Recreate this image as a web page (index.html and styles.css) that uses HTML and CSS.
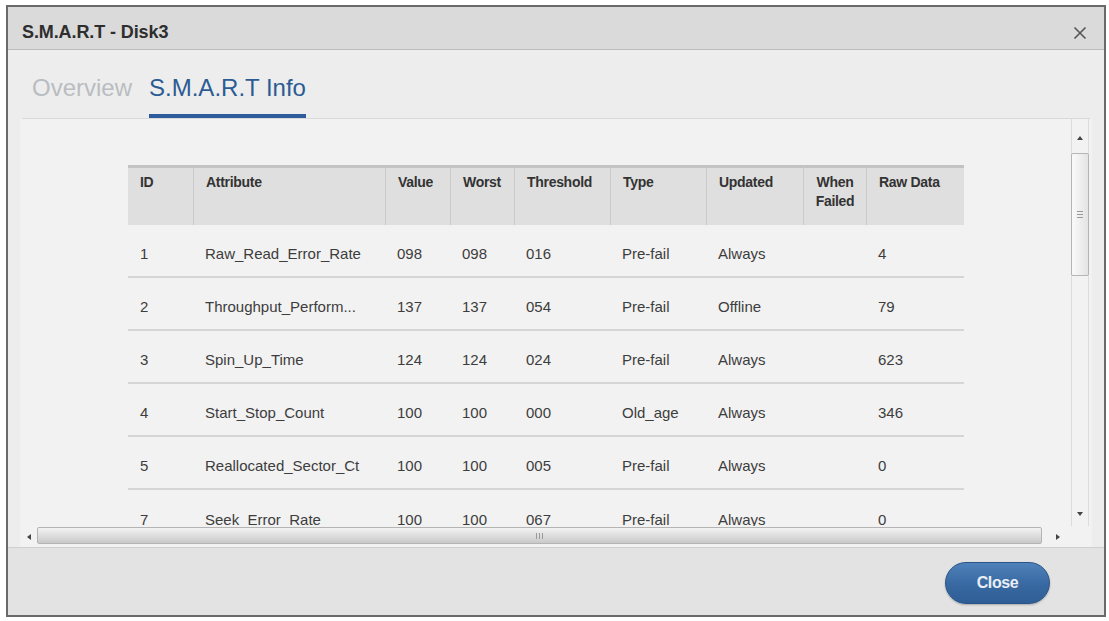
FILE: index.html
```html
<!DOCTYPE html>
<html lang="en">

<head>
  <meta charset="UTF-8">
  <meta name="viewport" content="width=device-width, initial-scale=1.0">
  <title>S.M.A.R.T - Disk3</title>
  <link rel="stylesheet" href="styles.css">
</head>

<body>
  <div class="c-dialog">
    <header class="c-dialog__head">
      <h1 class="c-dialog__title">S.M.A.R.T - Disk3</h1>
      <button class="c-dialog__x" aria-label="close">
        <svg width="14" height="14" viewBox="0 0 14 14">
          <path d="M1.5 1.5 L12.5 12.5 M12.5 1.5 L1.5 12.5" stroke="#555" stroke-width="1.6" fill="none" />
        </svg>
      </button>
    </header>

    <nav class="c-tabs">
      <span class="c-tabs__item">Overview</span>
      <span class="c-tabs__item is-active">S.M.A.R.T Info</span>
    </nav>

    <div class="c-scroll">
      <div class="c-scroll__view">
        <table class="c-smart">
          <colgroup>
            <col style="width: 65px">
            <col style="width: 192px">
            <col style="width: 65px">
            <col style="width: 64px">
            <col style="width: 96px">
            <col style="width: 96px">
            <col style="width: 97px">
            <col style="width: 63px">
            <col style="width: 98px">
          </colgroup>
          <thead>
            <tr>
              <th>ID</th>
              <th>Attribute</th>
              <th>Value</th>
              <th>Worst</th>
              <th>Threshold</th>
              <th>Type</th>
              <th>Updated</th>
              <th class="is-center">When<br>Failed</th>
              <th>Raw Data</th>
            </tr>
          </thead>
          <tbody>
            <tr>
              <td>1</td><td>Raw_Read_Error_Rate</td><td>098</td><td>098</td><td>016</td><td>Pre-fail</td><td>Always</td><td></td><td>4</td>
            </tr>
            <tr>
              <td>2</td><td>Throughput_Perform...</td><td>137</td><td>137</td><td>054</td><td>Pre-fail</td><td>Offline</td><td></td><td>79</td>
            </tr>
            <tr>
              <td>3</td><td>Spin_Up_Time</td><td>124</td><td>124</td><td>024</td><td>Pre-fail</td><td>Always</td><td></td><td>623</td>
            </tr>
            <tr>
              <td>4</td><td>Start_Stop_Count</td><td>100</td><td>100</td><td>000</td><td>Old_age</td><td>Always</td><td></td><td>346</td>
            </tr>
            <tr>
              <td>5</td><td>Reallocated_Sector_Ct</td><td>100</td><td>100</td><td>005</td><td>Pre-fail</td><td>Always</td><td></td><td>0</td>
            </tr>
            <tr>
              <td>7</td><td>Seek_Error_Rate</td><td>100</td><td>100</td><td>067</td><td>Pre-fail</td><td>Always</td><td></td><td>0</td>
            </tr>
          </tbody>
        </table>
      </div>

      <div class="c-scroll__v">
        <span class="c-arrow c-arrow--up"></span>
        <span class="c-scroll__vthumb"><i></i><i></i><i></i></span>
        <span class="c-arrow c-arrow--down"></span>
      </div>

      <div class="c-scroll__h">
        <span class="c-arrow c-arrow--left"></span>
        <span class="c-scroll__hthumb"><i></i><i></i><i></i></span>
        <span class="c-arrow c-arrow--right"></span>
      </div>
    </div>

    <footer class="c-dialog__foot">
      <button class="c-btn">Close</button>
    </footer>
  </div>
</body>

</html>
```

FILE: styles.css
```css
*,
*::before,
*::after {
  margin: 0;
  box-sizing: border-box;
}

body {
  font-family: "Liberation Sans", Arial, sans-serif;
  background: #fff;
  color: #333;
}

.c-dialog {
  width: 1100px;
  height: 612px;
  margin: 5px 0 0 6px;
  border: 2px solid #6a6a6a;
  background: #ededed;
  display: flex;
  flex-direction: column;
}

.c-dialog__head {
  height: 43px;
  flex: none;
  display: flex;
  align-items: center;
  justify-content: space-between;
  padding: 9px 17px 0 14px;
  background: #dadada;
  border-bottom: 1px solid #bcbcbc;
}

.c-dialog__title {
  font-size: 18px;
  font-weight: bold;
  color: #2e2e2e;
  letter-spacing: -.1px;
}

.c-dialog__x {
  border: 0;
  padding: 0;
  background: none;
  display: flex;
}

.c-tabs {
  height: 69px;
  flex: none;
  display: flex;
  align-items: flex-end;
  gap: 17px;
  margin: 0 14px;
  padding-left: 10px;
  border-bottom: 1px solid #d9d9d9;
}

.c-tabs__item {
  font-size: 24px;
  line-height: 30px;
  padding-bottom: 11px;
  border-bottom: 4px solid transparent;
  color: #b9bdc1;
}

.c-tabs__item.is-active {
  color: #2c5b93;
  border-bottom-color: #2d5c9c;
}

.c-scroll {
  flex: 1;
  min-height: 0;
  margin: 0 12px;
  background: #f2f2f2;
  display: grid;
  grid-template-columns: 1fr 24px;
  grid-template-rows: 407px 1fr;
}

.c-scroll__view {
  overflow: hidden;
  padding: 46px 0 0 108px;
}

.c-smart {
  width: 836px;
  border-collapse: separate;
  border-spacing: 0;
  table-layout: fixed;
  font-size: 15px;
  color: #3d3d3d;
}

.c-smart th {
  height: 60px;
  padding: 5px 0 0 12px;
  vertical-align: top;
  text-align: left;
  font-size: 14px;
  line-height: 19px;
  letter-spacing: -.3px;
  color: #333;
  background: #dfdfdf;
  border-top: 3px solid #c3c3c3;
  border-left: 1px solid #cacaca;
}

.c-smart th:first-child {
  border-left: 0;
}

.c-smart th.is-center {
  text-align: center;
  padding-left: 0;
}

.c-smart tbody tr {
  height: 53px;
}

.c-smart td {
  padding: 5px 0 0 12px;
  white-space: nowrap;
  border-bottom: 2px solid #d5d5d5;
}

.c-smart tbody tr:last-child td {
  border-bottom: 0;
}

.c-scroll__v {
  grid-row: 1 / 2;
  grid-column: 2;
  margin: 0 3px;
  padding: 14px 0 7px;
  border-left: 1px solid #dcdcdc;
  border-right: 1px solid #dcdcdc;
  display: flex;
  flex-direction: column;
  align-items: center;
}

.c-scroll__vthumb {
  width: 18px;
  height: 123px;
  margin-top: 10px;
  border: 1px solid #b5b5b5;
  border-radius: 2px;
  background: linear-gradient(to right, #fafafa, #e4e4e4);
  display: flex;
  flex-direction: column;
  justify-content: center;
  align-items: center;
  gap: 2px;
}

.c-scroll__vthumb i {
  width: 6px;
  height: 1px;
  background: #999;
}

.c-scroll__v .c-arrow--down {
  margin-top: auto;
}

.c-scroll__h {
  grid-row: 2;
  grid-column: 1;
  display: flex;
  align-items: flex-start;
  padding: 1px 3px 0 2px;
}

.c-scroll__hthumb {
  flex: 1;
  height: 17px;
  margin: 0 9px 0 1px;
  border: 1px solid #b4b4b4;
  border-radius: 2px;
  background: linear-gradient(#f3f3f3, #dcdcdc 55%, #c9c9c9);
  display: flex;
  justify-content: center;
  align-items: center;
  gap: 2px;
}

.c-scroll__hthumb i {
  width: 1px;
  height: 6px;
  background: #999;
}

.c-scroll__h .c-arrow {
  margin-top: 5px;
}

.c-arrow {
  width: 14px;
  height: 10px;
  flex: none;
  display: flex;
  justify-content: center;
  align-items: center;
}

.c-arrow::before {
  content: '';
  border: 3px solid transparent;
}

.c-arrow--up::before {
  border-bottom: 4px solid #444;
  border-top-width: 0;
}

.c-arrow--down::before {
  border-top: 4px solid #444;
  border-bottom-width: 0;
}

.c-arrow--left::before {
  border-right: 4px solid #444;
  border-left-width: 0;
}

.c-arrow--right::before {
  border-left: 4px solid #444;
  border-right-width: 0;
}

.c-dialog__foot {
  height: 68px;
  flex: none;
  display: flex;
  justify-content: flex-end;
  align-items: flex-start;
  padding: 14px 54px 0 0;
  background: #e3e3e3;
  border-top: 1px solid #cfcfcf;
}

.c-btn {
  width: 105px;
  height: 42px;
  border: 1px solid #2a5487;
  border-radius: 21px;
  background: linear-gradient(#4f82ba, #3a6aa3 50%, #2f5d95);
  box-shadow: 0 1px 2px rgba(0, 0, 0, .25);
  font-family: "Liberation Sans", Arial, sans-serif;
  font-size: 16px;
  font-weight: bold;
  letter-spacing: -.4px;
  color: #e9eff6;
}
```
